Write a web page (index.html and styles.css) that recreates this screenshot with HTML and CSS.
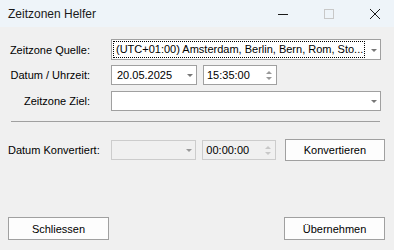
FILE: index.html
```html
<!DOCTYPE html>
<html lang="de">
<head>
    <meta charset="UTF-8">
    <title>Zeitzonen Helfer</title>
    <link rel="stylesheet" href="styles.css">
</head>
<body>
    <div class="window">
        <div class="titlebar">
            <span class="title">Zeitzonen Helfer</span>
            <div class="caption-buttons">
                <span class="cap-btn">
                    <svg width="10" height="10" viewBox="0 0 10 10"><path d="M0 5.5h10" stroke="#1a1a1a" stroke-width="1"/></svg>
                </span>
                <span class="cap-btn">
                    <svg width="10" height="10" viewBox="0 0 10 10"><rect x="0.5" y="0.5" width="9" height="9" fill="none" stroke="#c8c8c8" stroke-width="1"/></svg>
                </span>
                <span class="cap-btn">
                    <svg width="10" height="10" viewBox="0 0 10 10"><path d="M0 0L10 10M10 0L0 10" stroke="#1a1a1a" stroke-width="1"/></svg>
                </span>
            </div>
        </div>

        <div class="content">
            <div class="row row-first">
                <label class="label">Zeitzone Quelle:</label>
                <div class="combo combo-wide combo-tall">
                    <span class="combo-text focused">(UTC+01:00) Amsterdam, Berlin, Bern, Rom, Sto...</span>
                    <span class="arrow"></span>
                </div>
            </div>

            <div class="row">
                <label class="label">Datum / Uhrzeit:</label>
                <div class="combo combo-date">
                    <span class="combo-text">20.05.2025</span>
                    <span class="arrow"></span>
                </div>
                <div class="spin">
                    <span class="spin-text">15:35:00</span>
                    <span class="spin-arrows"><span class="up"></span><span class="down"></span></span>
                </div>
            </div>

            <div class="row">
                <label class="label">Zeitzone Ziel:</label>
                <div class="combo combo-wide">
                    <span class="combo-text"></span>
                    <span class="arrow"></span>
                </div>
            </div>

            <div class="separator"></div>

            <div class="row row-result">
                <label class="label label-left">Datum Konvertiert:</label>
                <div class="combo combo-date disabled">
                    <span class="combo-text"></span>
                    <span class="arrow"></span>
                </div>
                <div class="spin disabled">
                    <span class="spin-text">00:00:00</span>
                    <span class="spin-arrows"><span class="up"></span><span class="down"></span></span>
                </div>
                <button class="btn btn-convert">Konvertieren</button>
            </div>

            <div class="footer">
                <button class="btn">Schliessen</button>
                <button class="btn">Übernehmen</button>
            </div>
        </div>
    </div>
</body>
</html>
```

FILE: styles.css
```css
body {
    margin: 0;
    font-family: 'Liberation Sans', Arial, sans-serif;
    font-size: 11px;
    color: #000;
    background: #f0f0f0;
}
.window {
    width: 394px;
    height: 250px;
    background: #f0f0f0;
    overflow: hidden;
}
.titlebar {
    height: 27px;
    background: #eef4f9;
    display: flex;
    align-items: center;
    justify-content: space-between;
}
.title {
    font-size: 12px;
    color: #1a1a1a;
    padding-left: 8px;
}
.caption-buttons {
    display: flex;
    height: 100%;
    margin-right: -4px;
}
.cap-btn {
    width: 46px;
    display: flex;
    align-items: center;
    justify-content: center;
}
.content {
    padding: 12px 9px 0 8px;
}
.row {
    display: flex;
    align-items: center;
    height: 20px;
    margin-bottom: 6px;
}
.row-first {
    height: 21px;
    margin-bottom: 5px;
}
.label {
    width: 82px;
    text-align: right;
    margin-right: 21px;
    white-space: nowrap;
}
.label-left {
    text-align: left;
}
.combo {
    box-sizing: border-box;
    height: 20px;
    border: 1px solid #a0a0a0;
    background: #fff;
    display: flex;
    align-items: center;
    position: relative;
}
.combo-tall {
    height: 21px;
}
.combo-wide {
    width: 270px;
}
.combo-date {
    width: 86px;
}
.combo-text {
    flex: 1;
    box-sizing: border-box;
    height: 17px;
    line-height: 15px;
    margin-left: 1px;
    padding-left: 2px;
    white-space: nowrap;
    overflow: hidden;
    border: 1px solid transparent;
}
.combo-date .combo-text {
    padding-left: 3px;
}
.focused {
    border: 1px dotted #000;
    margin-right: 2px;
}
.arrow {
    width: 13px;
    flex: none;
    height: 100%;
    display: flex;
    align-items: center;
    justify-content: center;
}
.arrow::before {
    content: "";
    border-left: 3px solid transparent;
    border-right: 3px solid transparent;
    border-top: 3px solid #777;
    margin-top: 1px;
}
.spin {
    box-sizing: border-box;
    width: 74px;
    height: 20px;
    margin-left: 6px;
    border: 1px solid #a0a0a0;
    background: #fff;
    display: flex;
    align-items: center;
}
.spin-text {
    flex: 1;
    padding-left: 3px;
}
.spin-arrows {
    width: 14px;
    display: flex;
    flex-direction: column;
    align-items: center;
    gap: 3px;
}
.up {
    border-left: 3px solid transparent;
    border-right: 3px solid transparent;
    border-bottom: 3px solid #999;
}
.down {
    border-left: 3px solid transparent;
    border-right: 3px solid transparent;
    border-top: 3px solid #999;
}
.disabled {
    background: #f0f0f0;
    border-color: #cccccc;
}
.disabled .arrow::before {
    border-top-color: #999;
}
.disabled .up {
    border-bottom-color: #c8c8c8;
}
.disabled .down {
    border-top-color: #c8c8c8;
}
.separator {
    height: 1px;
    background: #a0a0a0;
    margin: 10px 5px 17px 3px;
}
.row-result {
    height: 22px;
}
.btn {
    box-sizing: border-box;
    width: 101px;
    height: 23px;
    background: #fdfdfd;
    border: 1px solid #a0a0a0;
    font-family: inherit;
    font-size: 11px;
    color: #000;
    padding: 0;
}
.btn-convert {
    height: 22px;
    margin-left: 9px;
}
.footer {
    display: flex;
    justify-content: space-between;
    margin-top: 56px;
}
```
